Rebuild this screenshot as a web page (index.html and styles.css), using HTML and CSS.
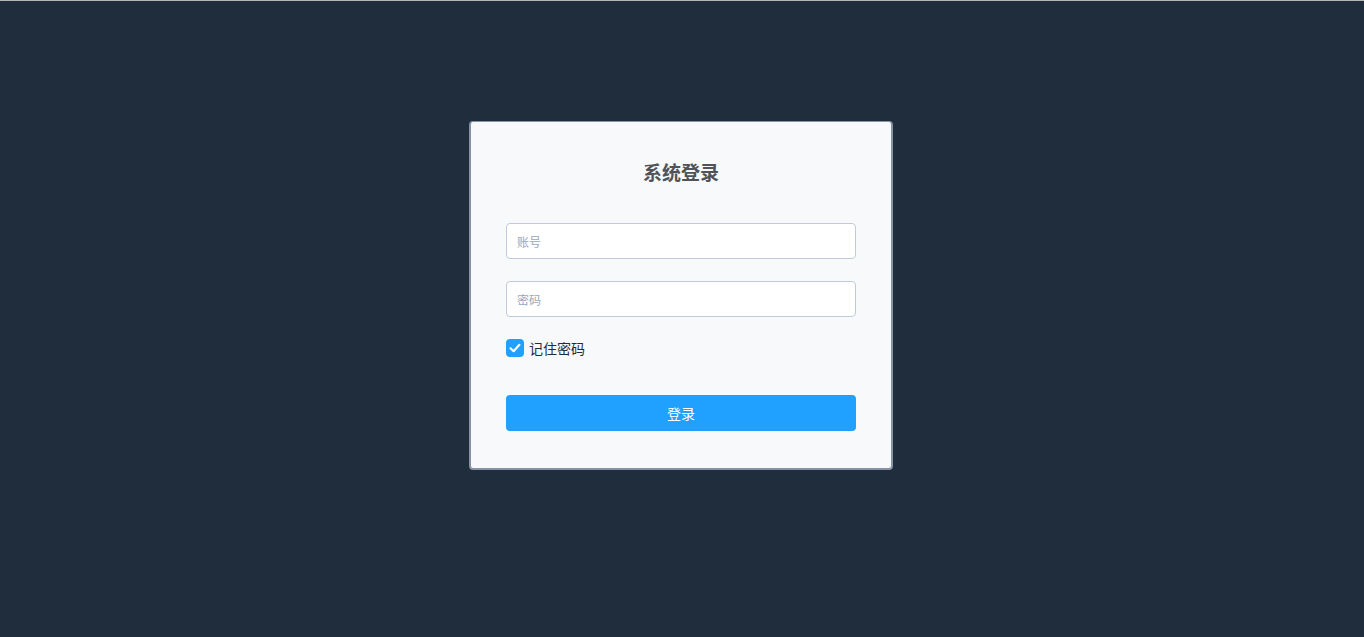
FILE: index.html
```html
<!DOCTYPE html>
<html lang="zh">
<head>
<meta charset="utf-8">
<title>系统登录</title>
<link rel="stylesheet" href="styles.css">
</head>
<body>
<div class="page">
  <form class="login-card">
    <h3 class="title">系统登录</h3>
    <input class="field" type="text" placeholder="账号">
    <input class="field" type="password" placeholder="密码">
    <label class="remember">
      <span class="check">
        <svg viewBox="0 0 18 18" width="18" height="18"><path d="M4.5 9.3 L7.6 12.2 L13.4 5.8" fill="none" stroke="#fff" stroke-width="2.2" stroke-linecap="round" stroke-linejoin="round"/></svg>
      </span>
      <span class="remember-text">记住密码</span>
    </label>
    <button class="submit" type="button">登录</button>
  </form>
</div>
</body>
</html>
```

FILE: styles.css
```css
* { box-sizing: border-box; }
html, body { margin: 0; padding: 0; height: 100%; }
body {
  background: #1f2d3d;
  border-top: 1px solid #b4b6b8;
  font-family: "Noto Sans CJK SC", "Noto Sans", sans-serif;
}
.page {
  display: flex;
  justify-content: center;
  padding-top: 120px;
}
.login-card {
  width: 424px;
  background: #f8f9fb;
  border: 2px solid #8593a5;
  border-top-width: 1px;
  border-radius: 4px;
  padding: 37px 35px 37px 35px;
  display: flex;
  flex-direction: column;
  margin-left: -2px;
}
.title {
  margin: 0 0 38px 0;
  text-align: center;
  font-size: 19px;
  line-height: 26px;
  font-weight: bold;
  color: #505458;
}
.field {
  height: 36px;
  width: 100%;
  border: 1px solid #bfcbd9;
  border-radius: 4px;
  background: #fff;
  padding: 0 10px;
  font-family: inherit;
  font-size: 12px;
  color: #1f2d3d;
  outline: none;
  margin-bottom: 22px;
}
.field::placeholder { color: #97a8be; }
.remember {
  display: flex;
  align-items: center;
  height: 18px;
  margin-bottom: 38px;
}
.check {
  width: 18px;
  height: 18px;
  border-radius: 4px;
  background: #20a0ff;
  display: flex;
}
.remember-text {
  margin-left: 5px;
  font-size: 14px;
  color: #1f2d3d;
  line-height: 18px;
}
.submit {
  height: 36px;
  width: 100%;
  border: none;
  border-radius: 4px;
  background: #20a0ff;
  color: #fff;
  font-family: inherit;
  font-size: 14px;
}
```
